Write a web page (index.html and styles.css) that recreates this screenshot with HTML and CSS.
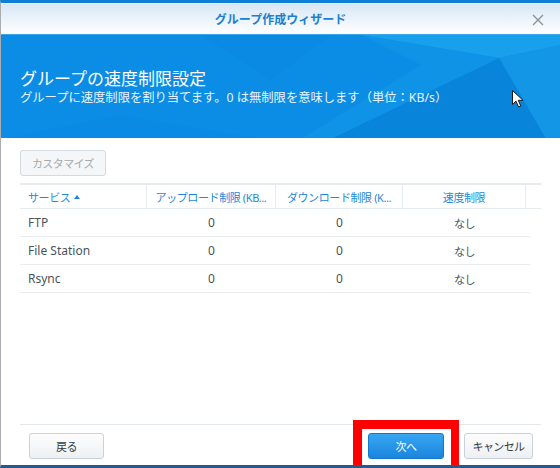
FILE: index.html
```html
<!DOCTYPE html>
<html>
  <head>
    <link rel="stylesheet" href="styles.css">
  </head>
  <body>
    <div class="window">
      <div class="titlebar">
        <div class="titlebar-text">グループ作成ウィザード</div>
        <svg class="close" width="12" height="12" viewBox="0 0 12 12">
          <path d="M1 1 L11 11 M11 1 L1 11" stroke="#8c9196" stroke-width="1.4" fill="none" />
        </svg>
      </div>

      <div class="banner">
        <svg class="banner-art" width="560" height="104" viewBox="0 0 560 104">
          <polygon points="200,0 330,0 270,45" fill="#0a8ae2" />
          <polygon points="360,0 560,0 560,10 498,23" fill="#18a0ec" />
          <polygon points="498,23 560,10 560,104 545,104" fill="#1396e6" />
          <polygon points="498,23 330,104 545,104" fill="#0884da" />
          <polygon points="360,0 498,23 330,104 300,104 420,30" fill="#0e93e7" />
          <polygon points="0,104 120,80 260,104" fill="#0a8ae3" />
        </svg>
        <div class="banner-title">グループの速度制限設定</div>
        <div class="banner-sub">グループに速度制限を割り当てます。0 は無制限を意味します（単位：KB/s）</div>
        <svg class="cursor" width="12" height="18" viewBox="0 0 12 18">
          <path d="M0.5 0.5 L0.5 14.5 L4 11.2 L6.6 17 L8.8 16 L6.3 10.3 L11 10.3 Z" fill="#ffffff" stroke="#1b1b1b" stroke-width="1" />
        </svg>
      </div>

      <div class="content">
        <div class="toolbar">
          <div class="btn btn_disabled">カスタマイズ</div>
        </div>

        <div class="grid">
          <div class="grid-head">
            <div class="head-cell head-cell_left">サービス <span class="sort"></span></div>
            <div class="head-cell">アップロード制限 (KB...</div>
            <div class="head-cell">ダウンロード制限 (K...</div>
            <div class="head-cell">速度制限</div>
            <div class="head-cell head-cell_end"></div>
          </div>
          <div class="grid-row">
            <div class="cell cell_left">FTP</div>
            <div class="cell">0</div>
            <div class="cell">0</div>
            <div class="cell cell_jp">なし</div>
          </div>
          <div class="grid-row">
            <div class="cell cell_left">File Station</div>
            <div class="cell">0</div>
            <div class="cell">0</div>
            <div class="cell cell_jp">なし</div>
          </div>
          <div class="grid-row">
            <div class="cell cell_left">Rsync</div>
            <div class="cell">0</div>
            <div class="cell">0</div>
            <div class="cell cell_jp">なし</div>
          </div>
        </div>
      </div>

      <div class="footer">
        <div class="btn btn_footer btn_back">戻る</div>
        <div class="footer-right">
          <div class="btn btn_footer btn_primary">次へ</div>
          <div class="btn btn_footer btn_cancel">キャンセル</div>
        </div>
      </div>

      <div class="highlight"></div>
    </div>
  </body>
</html>
```

FILE: styles.css
```css
body {
  margin: 0;
  background: #ffffff;
  font-family: "Noto Sans", "Noto Sans CJK JP", sans-serif;
}

.window {
  position: relative;
  width: 560px;
  height: 468px;
  box-sizing: border-box;
  border-top: 3px solid #0c80d8;
  border-bottom: 3px solid #245a92;
  border-left: 1px solid #a9adb1;
  display: flex;
  flex-direction: column;
  overflow: hidden;
}

/* title bar */

.titlebar {
  height: 31px;
  flex-shrink: 0;
  box-sizing: border-box;
  border-top: 1px solid #ffffff;
  background: linear-gradient(#d7e7f5, #ffffff);
  display: flex;
  align-items: center;
  justify-content: center;
  position: relative;
}

.titlebar-text {
  font-size: 12px;
  font-weight: bold;
  color: #1a7fd2;
}

.close {
  position: absolute;
  right: 16px;
  top: 10px;
}

/* banner */

.banner {
  height: 104px;
  flex-shrink: 0;
  box-sizing: border-box;
  background: #0b8de5;
  border-top: 1px solid #3aa6ee;
  padding: 33px 19px 0;
  position: relative;
  overflow: hidden;
  color: #ffffff;
}

.banner-art {
  position: absolute;
  left: 0;
  top: 0;
}

.banner-title {
  position: relative;
  font-size: 17px;
  line-height: 21px;
}

.banner-sub {
  position: relative;
  font-size: 12.3px;
  line-height: 16px;
  margin-top: 1px;
  color: #e8f4fd;
}

.cursor {
  position: absolute;
  left: 511px;
  top: 55px;
}

/* content */

.content {
  flex: 1;
  padding: 12px 19px 0 19px;
}

.toolbar {
  display: flex;
  margin-bottom: 7px;
}

.btn {
  height: 26px;
  box-sizing: border-box;
  border-radius: 3px;
  font-size: 11px;
  letter-spacing: -0.6px;
  display: flex;
  align-items: center;
  justify-content: center;
}

.btn_disabled {
  width: 86px;
  background: #f4f6f8;
  border: 1px solid #d3dae1;
  color: #a3aab1;
}

.grid {
  font-size: 12px;
}

.grid-head {
  display: grid;
  grid-template-columns: 127px 129px 127px 123px 15px;
  height: 26px;
  box-sizing: border-box;
  border-top: 2px solid #e6ebf0;
  border-bottom: 1px solid #e6ebf0;
}

.head-cell {
  color: #1e88d8;
  font-size: 11px;
  letter-spacing: -0.4px;
  display: flex;
  align-items: center;
  justify-content: center;
  border-right: 1px solid #e6ebf0;
  white-space: nowrap;
  overflow: hidden;
}

.head-cell_left {
  justify-content: flex-start;
  padding-left: 8px;
}

.head-cell_end {
  border-right: none;
}

.sort {
  display: inline-block;
  width: 0;
  height: 0;
  margin-left: 4px;
  border-left: 3px solid transparent;
  border-right: 3px solid transparent;
  border-bottom: 4px solid #1e88d8;
}

.grid-row {
  display: grid;
  grid-template-columns: 127px 129px 127px 123px;
  width: 510px;
  height: 28px;
  box-sizing: border-box;
  border-bottom: 1px solid #e8ecf0;
}

.cell {
  color: #4a535c;
  display: flex;
  align-items: center;
  justify-content: center;
}

.cell_left {
  justify-content: flex-start;
  padding-left: 8px;
}

.cell_jp {
  font-size: 11px;
  letter-spacing: -0.5px;
}

/* footer */

.footer {
  height: 41px;
  flex-shrink: 0;
  box-sizing: border-box;
  margin: 0 19px 0 19px;
  border-top: 1px solid #e3e8ed;
  padding: 8px 8px 0 9px;
  display: flex;
  justify-content: space-between;
  align-items: flex-start;
}

.footer-right {
  display: flex;
  gap: 20px;
}

.btn_footer {
  background: linear-gradient(#fdfdfe, #edf0f3);
  border: 1px solid #cad1d8;
  color: #333b43;
}

.btn_back {
  width: 75px;
}

.btn_primary {
  width: 76px;
  background: linear-gradient(#38a6f2, #1a85de);
  border: 1px solid #1677c9;
  color: #ffffff;
}

.btn_cancel {
  width: 69px;
}

.highlight {
  position: absolute;
  left: 352px;
  top: 417px;
  width: 106px;
  height: 60px;
  box-sizing: border-box;
  border: 9px solid #ff0000;
  border-right-width: 8px;
}
```
